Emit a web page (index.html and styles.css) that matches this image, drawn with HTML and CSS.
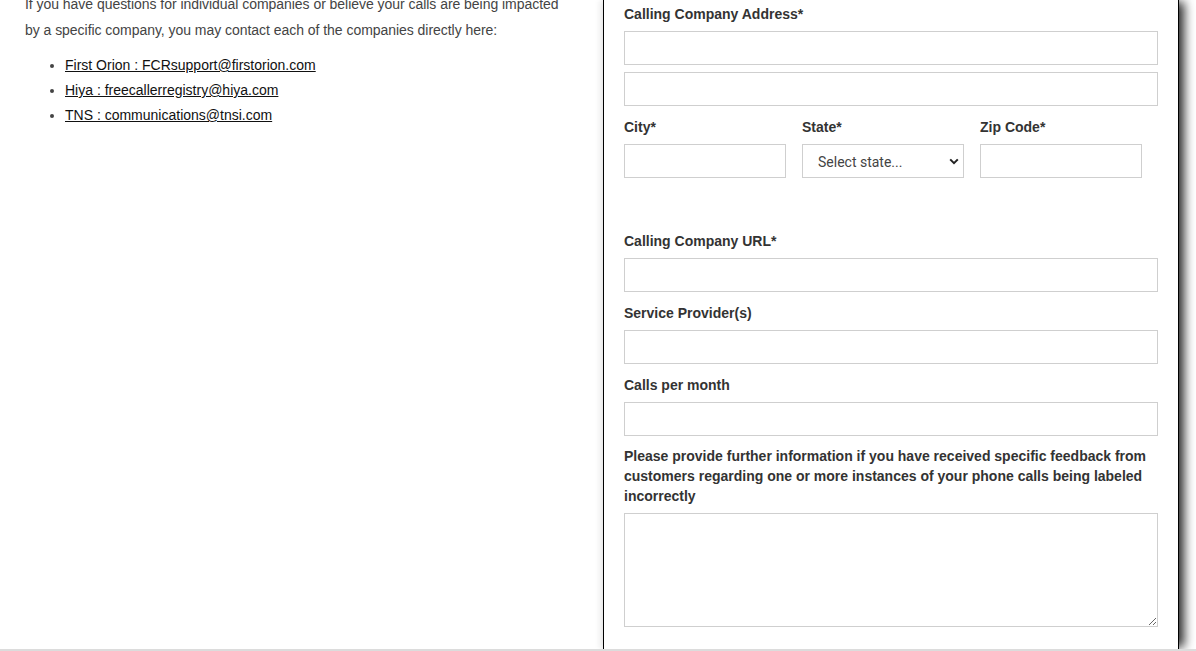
FILE: index.html
```html
<!DOCTYPE html>
<html lang="en">
<head>
<meta charset="utf-8">
<title>Free Caller Registry – Contact</title>
<link rel="stylesheet" href="styles.css">
</head>
<body>
<div class="page">
  <section class="info">
    <p class="intro">If you have questions for individual companies or believe your calls are being impacted by a specific company, you may contact each of the companies directly here:</p>
    <ul class="contacts">
      <li><a href="#">First Orion : FCRsupport@firstorion.com</a></li>
      <li><a href="#">Hiya : freecallerregistry@hiya.com</a></li>
      <li><a href="#">TNS : communications@tnsi.com</a></li>
    </ul>
  </section>

  <section class="panel">
    <form class="form">
      <div class="field">
        <label class="label">Calling Company Address*</label>
        <input class="input" type="text">
        <input class="input stacked" type="text">
      </div>

      <div class="row">
        <div class="col">
          <label class="label">City*</label>
          <input class="input" type="text">
        </div>
        <div class="col">
          <label class="label">State*</label>
          <div class="select-wrap">
            <select class="select">
              <option>Select state...</option>
            </select>
            <svg class="chev" width="10" height="7" viewBox="0 0 10 7"><path d="M1.2 1.4 L5 5.2 L8.8 1.4" fill="none" stroke="#222" stroke-width="2"/></svg>
          </div>
        </div>
        <div class="col">
          <label class="label">Zip Code*</label>
          <input class="input" type="text">
        </div>
      </div>

      <div class="field url">
        <label class="label">Calling Company URL*</label>
        <input class="input" type="text">
      </div>

      <div class="field">
        <label class="label">Service Provider(s)</label>
        <input class="input" type="text">
      </div>

      <div class="field tight">
        <label class="label">Calls per month</label>
        <input class="input" type="text">
      </div>

      <div class="field">
        <label class="label">Please provide further information if you have received specific feedback from customers regarding one or more instances of your phone calls being labeled incorrectly</label>
        <textarea class="textarea"></textarea>
      </div>
    </form>
  </section>
</div>
</body>
</html>
```

FILE: styles.css
```css
html, body {
  margin: 0;
  padding: 0;
  background: #fff;
}

body {
  font-family: "Liberation Sans", Arial, sans-serif;
  font-size: 14px;
  color: #444;
}

.page {
  display: flex;
  height: 649px;
  overflow: hidden;
  border-bottom: 2px solid #dcdcdc;
}

/* left column: contact information */
.info {
  width: 578px;
  padding-left: 25px;
  flex: none;
}

.intro {
  max-width: 545px;
  margin: -9px 0 10px;
  line-height: 26px;
  letter-spacing: -0.04px;
  color: #444;
}

.contacts {
  margin: 0;
  padding-left: 40px;
  line-height: 25px;
}

.contacts a {
  color: #111;
  text-decoration: underline;
}

/* right column: registration form card */
.panel {
  width: 534px;
  padding: 0 20px 0 20px;
  border-left: 1px solid #000;
  border-right: 1px solid #000;
  box-shadow: 7px 0 10px -2px rgba(0, 0, 0, 0.85), -3px 0 6px rgba(0, 0, 0, 0.08);
  background: #fff;
  flex: none;
  position: relative;
}

.form {
  padding-top: 4px;
}

.label {
  display: block;
  font-weight: bold;
  font-size: 14px;
  line-height: 20px;
  color: #333;
  margin-bottom: 7px;
}

.field {
  margin-bottom: 11px;
}

.field.tight {
  margin-bottom: 10px;
}

.field.url {
  margin-top: 53px;
}

.input,
.select,
.textarea {
  display: block;
  box-sizing: border-box;
  width: 100%;
  height: 34px;
  margin: 0;
  border: 1px solid #cfcfcf;
  background: #fff;
  font-family: "Liberation Sans", Arial, sans-serif;
  font-size: 14px;
  outline: none;
}

.input.stacked {
  margin-top: 7px;
}

.row {
  display: flex;
  gap: 16px;
}

.col {
  width: 162px;
}

.select-wrap {
  position: relative;
}

.select {
  appearance: none;
  -webkit-appearance: none;
  padding: 2px 0 0 15px;
  font-family: Roboto, "Liberation Sans", sans-serif;
  color: #444;
  border-radius: 0;
}

.chev {
  position: absolute;
  right: 5px;
  top: 14px;
  pointer-events: none;
}

.textarea {
  height: 114px;
  resize: vertical;
}
```
